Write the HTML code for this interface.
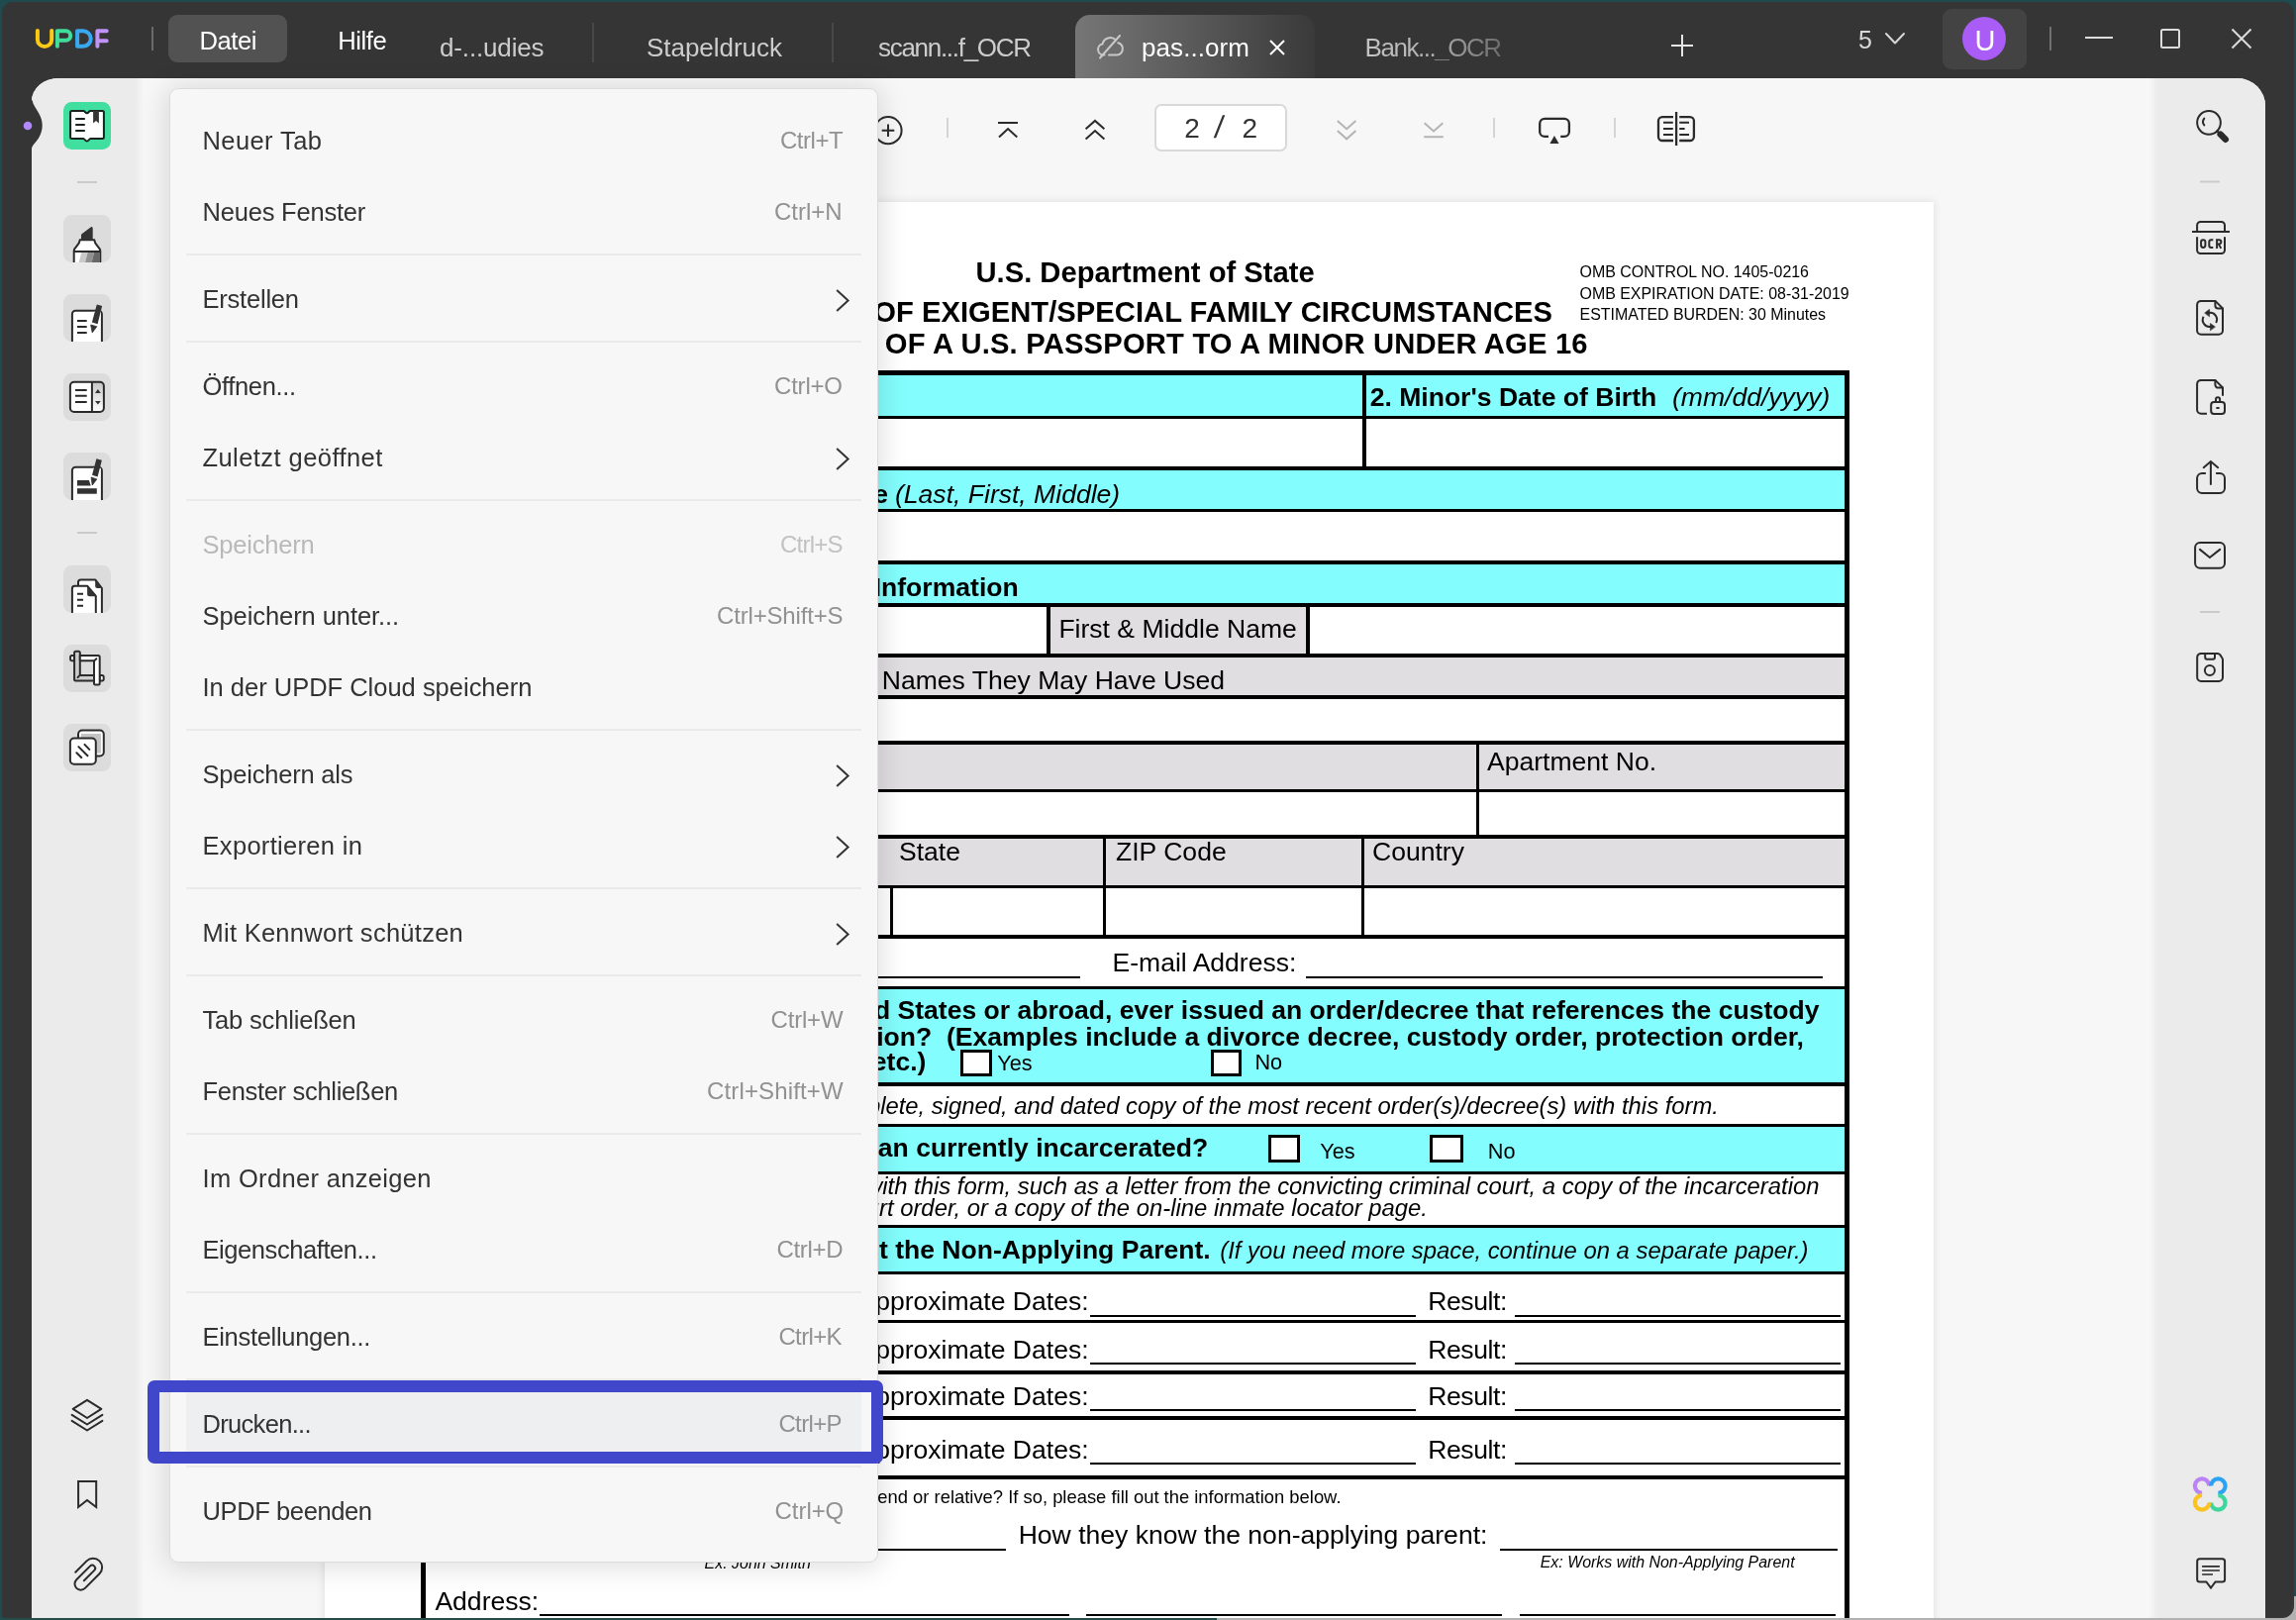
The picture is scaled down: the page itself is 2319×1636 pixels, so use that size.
<!DOCTYPE html>
<html><head><meta charset="utf-8"><title>UPDF</title>
<style>
html,body{margin:0;padding:0;}
body{width:2319px;height:1636px;position:relative;overflow:hidden;background:#1f4a4e;font-family:"Liberation Sans",sans-serif;color:#000;}
.t{position:absolute;white-space:nowrap;line-height:1;}
#w{position:absolute;left:0;top:0;width:2319px;height:1636px;will-change:transform;}
.r{position:absolute;}
svg{position:absolute;overflow:visible;}
</style></head><body><div id="w">
<div class="r" style="left:2296.00px;top:1612.00px;width:23.00px;height:24.00px;background:#b1b1b1;"></div>
<div class="r" style="left:2.00px;top:2.00px;width:2315.00px;height:1632.00px;background:#353535;border-radius:11px 11px 12px 3px;"></div>
<div class="r" style="left:32.00px;top:79.00px;width:2256.00px;height:1555.00px;background:#f7f7f8;border-radius:27px 28px 0 0 / 23px 28px 0 0;"></div>
<div class="r" style="left:32.00px;top:79.00px;width:110.00px;height:1555.00px;background:#ebebec;border-radius:27px 0 0 0 / 23px 0 0 0;"></div>
<div class="r" style="left:136.00px;top:79.00px;width:8.00px;height:1555.00px;background:linear-gradient(90deg,#ebebec,#f5f5f6);"></div>
<div class="r" style="left:2177.00px;top:79.00px;width:111.00px;height:1555.00px;background:#ebebec;border-radius:0 28px 0 0;"></div>
<div class="r" style="left:2171.00px;top:79.00px;width:8.00px;height:1555.00px;background:linear-gradient(90deg,#f7f7f8,#ebebec);"></div>
<svg style="left:0;top:0" width="60" height="200"><path d="M31 100 L32.6 101.5 C33.5 106 36.5 109.5 39 114 C41.5 118.5 42.7 122 42.7 126.7 C42.7 131 41.5 135 39 139.5 C36.5 143.5 33 146 32 149.5 L31 150 Z" fill="#353535"/><circle cx="28" cy="127" r="4.3" fill="#b388ff"/></svg>
<div class="r" style="left:328.00px;top:204.00px;width:1625.00px;height:1440.00px;background:#fff;box-shadow:0 0 8px 1px rgba(0,0,0,0.09);"></div>
<div class="t" style="top:260.80px;font-size:29.20px;font-weight:bold;left:985.50px;">U.S. Department of State</div>
<div class="t" style="top:301.40px;font-size:29.20px;font-weight:bold;letter-spacing:0.024px;right:750.98px;">STATEMENT OF EXIGENT/SPECIAL FAMILY CIRCUMSTANCES</div>
<div class="t" style="top:332.70px;font-size:29.20px;font-weight:bold;letter-spacing:0.185px;right:715.21px;">FOR ISSUANCE OF A U.S. PASSPORT TO A MINOR UNDER AGE 16</div>
<div class="t" style="top:267.12px;font-size:15.95px;left:1595.50px;">OMB CONTROL NO. 1405-0216</div>
<div class="t" style="top:288.72px;font-size:15.95px;left:1595.50px;">OMB EXPIRATION DATE: 08-31-2019</div>
<div class="t" style="top:310.22px;font-size:15.95px;left:1595.50px;">ESTIMATED BURDEN: 30 Minutes</div>
<div class="r" style="left:426.50px;top:376.00px;width:1439.50px;height:45.60px;background:#83fdfd;"></div>
<div class="r" style="left:426.50px;top:473.00px;width:1439.50px;height:42.40px;background:#83fdfd;"></div>
<div class="r" style="left:426.50px;top:568.00px;width:1439.50px;height:43.00px;background:#83fdfd;"></div>
<div class="r" style="left:1059.00px;top:611.00px;width:262.00px;height:51.00px;background:#e0dee0;"></div>
<div class="r" style="left:426.50px;top:611.00px;width:273.50px;height:51.00px;background:#e0dee0;"></div>
<div class="r" style="left:426.50px;top:662.00px;width:1439.50px;height:42.00px;background:#e0dee0;"></div>
<div class="r" style="left:426.50px;top:750.00px;width:1439.50px;height:48.00px;background:#e0dee0;"></div>
<div class="r" style="left:426.50px;top:845.00px;width:1439.50px;height:50.50px;background:#e0dee0;"></div>
<div class="r" style="left:426.50px;top:997.60px;width:1439.50px;height:97.10px;background:#83fdfd;"></div>
<div class="r" style="left:426.50px;top:1136.30px;width:1439.50px;height:48.00px;background:#83fdfd;"></div>
<div class="r" style="left:426.50px;top:1238.70px;width:1439.50px;height:46.60px;background:#83fdfd;"></div>
<div class="r" style="left:424.50px;top:374.00px;width:1443.50px;height:5.20px;background:#000;"></div>
<div class="r" style="left:424.50px;top:419.80px;width:1443.50px;height:3.60px;background:#000;"></div>
<div class="r" style="left:424.50px;top:471.25px;width:1443.50px;height:3.90px;background:#000;"></div>
<div class="r" style="left:424.50px;top:513.60px;width:1443.50px;height:3.60px;background:#000;"></div>
<div class="r" style="left:424.50px;top:566.20px;width:1443.50px;height:3.80px;background:#000;"></div>
<div class="r" style="left:424.50px;top:609.00px;width:1443.50px;height:3.60px;background:#000;"></div>
<div class="r" style="left:424.50px;top:660.20px;width:1443.50px;height:3.60px;background:#000;"></div>
<div class="r" style="left:424.50px;top:702.40px;width:1443.50px;height:3.60px;background:#000;"></div>
<div class="r" style="left:424.50px;top:747.95px;width:1443.50px;height:3.70px;background:#000;"></div>
<div class="r" style="left:424.50px;top:796.50px;width:1443.50px;height:3.60px;background:#000;"></div>
<div class="r" style="left:424.50px;top:843.00px;width:1443.50px;height:3.60px;background:#000;"></div>
<div class="r" style="left:424.50px;top:893.90px;width:1443.50px;height:3.60px;background:#000;"></div>
<div class="r" style="left:424.50px;top:944.20px;width:1443.50px;height:3.60px;background:#000;"></div>
<div class="r" style="left:424.50px;top:995.80px;width:1443.50px;height:3.60px;background:#000;"></div>
<div class="r" style="left:424.50px;top:1092.75px;width:1443.50px;height:3.90px;background:#000;"></div>
<div class="r" style="left:424.50px;top:1134.55px;width:1443.50px;height:3.50px;background:#000;"></div>
<div class="r" style="left:424.50px;top:1182.50px;width:1443.50px;height:3.60px;background:#000;"></div>
<div class="r" style="left:424.50px;top:1236.95px;width:1443.50px;height:3.50px;background:#000;"></div>
<div class="r" style="left:424.50px;top:1283.55px;width:1443.50px;height:3.50px;background:#000;"></div>
<div class="r" style="left:424.50px;top:1332.50px;width:1443.50px;height:3.60px;background:#000;"></div>
<div class="r" style="left:424.50px;top:1384.30px;width:1443.50px;height:3.60px;background:#000;"></div>
<div class="r" style="left:424.50px;top:1430.40px;width:1443.50px;height:3.60px;background:#000;"></div>
<div class="r" style="left:424.50px;top:1489.90px;width:1443.50px;height:3.80px;background:#000;"></div>
<div class="r" style="left:424.50px;top:374.00px;width:5.20px;height:1300.00px;background:#000;"></div>
<div class="r" style="left:1863.00px;top:374.00px;width:5.00px;height:1300.00px;background:#000;"></div>
<div class="r" style="left:1376.20px;top:376.00px;width:3.60px;height:99.00px;background:#000;"></div>
<div class="r" style="left:1057.20px;top:611.00px;width:3.60px;height:53.00px;background:#000;"></div>
<div class="r" style="left:1319.20px;top:611.00px;width:3.60px;height:53.00px;background:#000;"></div>
<div class="r" style="left:1490.50px;top:749.00px;width:3.40px;height:97.60px;background:#000;"></div>
<div class="r" style="left:1113.95px;top:844.00px;width:3.30px;height:103.80px;background:#000;"></div>
<div class="r" style="left:1375.15px;top:844.00px;width:3.30px;height:103.80px;background:#000;"></div>
<div class="r" style="left:898.60px;top:894.00px;width:3.20px;height:53.80px;background:#000;"></div>
<div class="r" style="left:698.00px;top:611.00px;width:4.00px;height:52.00px;background:#000;"></div>
<div class="t" style="top:388.12px;font-size:26.55px;font-weight:bold;left:1383.70px;">2. Minor's Date of Birth</div>
<div class="t" style="top:388.12px;font-size:26.55px;font-style:italic;left:1689.00px;">(mm/dd/yyyy)</div>
<div class="t" style="top:388.12px;font-size:26.55px;font-weight:bold;left:440.00px;">1. Minor's Name</div>
<div class="t" style="top:485.73px;font-size:26.55px;font-style:italic;left:904.00px;">(Last, First, Middle)</div>
<div class="t" style="top:485.73px;font-size:26.55px;font-weight:bold;right:1422.00px;">3. Applying Parent or Guardian's Name</div>
<div class="t" style="top:579.73px;font-size:26.55px;font-weight:bold;right:1290.30px;">4. Non-Applying Parent's Information</div>
<div class="t" style="top:621.62px;font-size:26.55px;left:1069.40px;">First &amp; Middle Name</div>
<div class="t" style="top:621.62px;font-size:26.55px;left:440.00px;">Last Name</div>
<div class="t" style="top:674.33px;font-size:26.55px;right:1082.00px;">List All Other Names They May Have Used</div>
<div class="t" style="top:755.73px;font-size:26.55px;left:1502.00px;">Apartment No.</div>
<div class="t" style="top:755.73px;font-size:26.55px;left:440.00px;">Last Known Address (Street)</div>
<div class="t" style="top:846.73px;font-size:26.55px;left:908.00px;">State</div>
<div class="t" style="top:846.73px;font-size:26.55px;left:1127.00px;">ZIP Code</div>
<div class="t" style="top:846.73px;font-size:26.55px;left:1386.00px;">Country</div>
<div class="t" style="top:846.73px;font-size:26.55px;left:440.00px;">City</div>
<div class="t" style="top:959.43px;font-size:26.55px;left:1123.50px;">E-mail Address:</div>
<div class="t" style="top:959.43px;font-size:26.55px;left:440.00px;">Telephone Number:</div>
<div class="r" style="left:668.00px;top:986.40px;width:422.80px;height:2.10px;background:#000;"></div>
<div class="r" style="left:1318.60px;top:986.40px;width:522.20px;height:2.10px;background:#000;"></div>
<div class="t" style="top:1006.52px;font-size:26.55px;font-weight:bold;right:481.50px;">5. Has a court, in the United States or abroad, ever issued an order/decree that references the custody</div>
<div class="t" style="top:1033.52px;font-size:26.55px;font-weight:bold;right:497.00px;">of the minor in this application?&nbsp; (Examples include a divorce decree, custody order, protection order,</div>
<div class="t" style="top:1058.72px;font-size:26.55px;font-weight:bold;right:1383.60px;">etc.)</div>
<div class="r" style="left:970.2px;top:1060.0px;width:31.5px;height:27.4px;border:3px solid #000;box-sizing:border-box;background:#fff"></div>
<div class="t" style="top:1062.55px;font-size:21.70px;left:1007.20px;">Yes</div>
<div class="r" style="left:1223.0px;top:1060.0px;width:31.3px;height:27.4px;border:3px solid #000;box-sizing:border-box;background:#fff"></div>
<div class="t" style="top:1062.35px;font-size:21.70px;left:1267.40px;">No</div>
<div class="t" style="top:1105.38px;font-size:23.85px;font-style:italic;right:583.00px;">If yes, please submit a complete, signed, and dated copy of the most recent order(s)/decree(s) with this form.</div>
<div class="t" style="top:1146.12px;font-size:26.55px;font-weight:bold;right:1098.70px;">6. Is the non-applying parent/guardian currently incarcerated?</div>
<div class="r" style="left:1281.1px;top:1145.9px;width:31.7px;height:27.7px;border:3px solid #000;box-sizing:border-box;background:#fff"></div>
<div class="t" style="top:1152.45px;font-size:21.70px;left:1333.30px;">Yes</div>
<div class="r" style="left:1444.0px;top:1145.9px;width:34.0px;height:27.7px;border:3px solid #000;box-sizing:border-box;background:#fff"></div>
<div class="t" style="top:1152.45px;font-size:21.70px;left:1502.80px;">No</div>
<div class="t" style="top:1186.38px;font-size:23.85px;font-style:italic;right:481.50px;">If yes, please submit evidence with this form, such as a letter from the convicting criminal court, a copy of the incarceration</div>
<div class="t" style="top:1207.88px;font-size:23.85px;font-style:italic;right:877.00px;">order or court order, or a copy of the on-line inmate locator page.</div>
<div class="t" style="top:1249.22px;font-size:26.55px;font-weight:bold;right:1096.30px;">7. Explain your attempts to contact the Non-Applying Parent.</div>
<div class="t" style="top:1251.08px;font-size:23.85px;font-style:italic;left:1232.30px;">(If you need more space, continue on a separate paper.)</div>
<div class="t" style="top:1300.52px;font-size:26.55px;left:440.00px;">Method:</div>
<div class="t" style="top:1300.52px;font-size:26.55px;right:1219.40px;">Approximate Dates:</div>
<div class="r" style="left:540.00px;top:1328.00px;width:330.00px;height:2.00px;background:#000;"></div>
<div class="r" style="left:1101.00px;top:1328.00px;width:329.00px;height:2.00px;background:#000;"></div>
<div class="t" style="top:1300.52px;font-size:26.55px;letter-spacing:-0.439px;left:1442.30px;">Result:</div>
<div class="r" style="left:1529.70px;top:1328.00px;width:329.30px;height:2.00px;background:#000;"></div>
<div class="t" style="top:1349.52px;font-size:26.55px;left:440.00px;">Method:</div>
<div class="t" style="top:1349.52px;font-size:26.55px;right:1219.40px;">Approximate Dates:</div>
<div class="r" style="left:540.00px;top:1376.00px;width:330.00px;height:2.00px;background:#000;"></div>
<div class="r" style="left:1101.00px;top:1376.00px;width:329.00px;height:2.00px;background:#000;"></div>
<div class="t" style="top:1349.52px;font-size:26.55px;letter-spacing:-0.439px;left:1442.30px;">Result:</div>
<div class="r" style="left:1529.70px;top:1376.00px;width:329.30px;height:2.00px;background:#000;"></div>
<div class="t" style="top:1396.52px;font-size:26.55px;left:440.00px;">Method:</div>
<div class="t" style="top:1396.52px;font-size:26.55px;right:1219.40px;">Approximate Dates:</div>
<div class="r" style="left:540.00px;top:1423.00px;width:330.00px;height:2.00px;background:#000;"></div>
<div class="r" style="left:1101.00px;top:1423.00px;width:329.00px;height:2.00px;background:#000;"></div>
<div class="t" style="top:1396.52px;font-size:26.55px;letter-spacing:-0.439px;left:1442.30px;">Result:</div>
<div class="r" style="left:1529.70px;top:1423.00px;width:329.30px;height:2.00px;background:#000;"></div>
<div class="t" style="top:1451.02px;font-size:26.55px;left:440.00px;">Method:</div>
<div class="t" style="top:1451.02px;font-size:26.55px;right:1219.40px;">Approximate Dates:</div>
<div class="r" style="left:540.00px;top:1477.00px;width:330.00px;height:2.00px;background:#000;"></div>
<div class="r" style="left:1101.00px;top:1477.00px;width:329.00px;height:2.00px;background:#000;"></div>
<div class="t" style="top:1451.02px;font-size:26.55px;letter-spacing:-0.439px;left:1442.30px;">Result:</div>
<div class="r" style="left:1529.70px;top:1477.00px;width:329.30px;height:2.00px;background:#000;"></div>
<div class="t" style="top:1503.30px;font-size:18.40px;right:964.50px;">8. Have you tried to contact the non-applying parent through a friend or relative? If so, please fill out the information below.</div>
<div class="t" style="top:1536.72px;font-size:26.55px;left:440.00px;">Name:</div>
<div class="r" style="left:520.00px;top:1564.00px;width:495.70px;height:2.00px;background:#000;"></div>
<div class="t" style="top:1536.72px;font-size:26.55px;left:1028.70px;">How they know the non-applying parent:</div>
<div class="r" style="left:1515.00px;top:1564.00px;width:340.70px;height:2.00px;background:#000;"></div>
<div class="t" style="top:1571.03px;font-size:15.95px;font-style:italic;left:711.60px;">Ex: John Smith</div>
<div class="t" style="top:1570.33px;font-size:15.95px;font-style:italic;left:1555.70px;">Ex: Works with Non-Applying Parent</div>
<div class="t" style="top:1603.72px;font-size:26.55px;left:439.40px;">Address:</div>
<div class="r" style="left:544.80px;top:1630.00px;width:535.60px;height:2.10px;background:#000;"></div>
<div class="r" style="left:1097.00px;top:1630.00px;width:419.50px;height:2.10px;background:#000;"></div>
<div class="r" style="left:1534.70px;top:1630.00px;width:319.30px;height:2.10px;background:#000;"></div>
<svg style="left:0.00px;top:0.00px;" width="130.00" height="70.00" fill="none"><g stroke-width="4.0" stroke-linecap="round" stroke-linejoin="round">
<path d="M37.9 31.1 V39.9 a7.15 7.15 0 0 0 14.3 0 V31.1" stroke="#fcc916"/>
<path d="M57.9 46.8 V31.3 H66.5 a4.7 4.7 0 0 1 0 9.4 H57.9" stroke="#40de9b"/>
<path d="M78.1 31.3 H83.95 a7.75 7.75 0 0 1 0 15.5 H78.1 Z" stroke="#38a9f0"/>
<path d="M98.4 46.8 V31.3 H107.7 M98.4 41.2 H107.7" stroke="#c193fa"/>
</g></svg>
<div class="r" style="left:152.50px;top:27.00px;width:2.00px;height:24.00px;background:#6a6a6a;"></div>
<div class="r" style="left:170.00px;top:15.00px;width:120.00px;height:48.00px;background:#525252;border-radius:9px;"></div>
<div class="t" style="top:29.40px;font-size:25.60px;color:#ffffff;letter-spacing:-0.416px;left:201.40px;">Datei</div>
<div class="t" style="top:29.40px;font-size:25.60px;color:#ffffff;letter-spacing:-0.429px;left:341.30px;">Hilfe</div>
<div class="t" style="top:35.00px;font-size:26.00px;color:#cdcdcd;letter-spacing:-0.150px;left:444.00px;">d-...udies</div>
<div class="r" style="left:598.00px;top:23.00px;width:2.00px;height:40.00px;background:#484848;"></div>
<div class="t" style="top:35.00px;font-size:26.00px;color:#cdcdcd;letter-spacing:-0.030px;left:653.00px;">Stapeldruck</div>
<div class="r" style="left:840.00px;top:23.00px;width:2.00px;height:40.00px;background:#484848;"></div>
<div class="t" style="top:35.00px;font-size:26.00px;color:#cdcdcd;letter-spacing:-1.293px;left:887.00px;">scann...f_OCR</div>
<div class="r" style="left:1086.00px;top:14.60px;width:242.00px;height:64.60px;background:linear-gradient(90deg,#767676 0%,#5c5c5c 45%,#434343 85%,#3a3a3a 100%);border-radius:15px 15px 0 0;"></div>
<svg style="left:1106.00px;top:33.00px;" width="32.00" height="28.00" fill="none"><g stroke="#c9c9c9" stroke-width="2" stroke-linecap="round" stroke-linejoin="round">
<path d="M9.5 22.5 H8.5 a5.5 5.5 0 0 1 -1 -10.9 a8 8 0 0 1 13.5 -4.2"/>
<path d="M23.2 10.2 a6.3 6.3 0 0 1 -0.7 12.3 H14"/>
<path d="M25 3 L5 25.5"/>
</g></svg>
<div class="t" style="top:35.00px;font-size:26.00px;color:#ffffff;letter-spacing:0.079px;left:1153.00px;">pas...orm</div>
<svg style="left:1282.00px;top:40.00px;" width="16.00" height="16.00" fill="none"><path d="M1 1 L15 15 M15 1 L1 15" stroke="#fff" stroke-width="2"/></svg>
<div class="t" style="left:1378.6px;top:34.99px;font-size:26px;letter-spacing:-1.477px;background:linear-gradient(90deg,#c4c4c4 0%,#b0b0b0 50%,#6c6c6c 100%);-webkit-background-clip:text;background-clip:text;color:transparent;">Bank..._OCR</div>
<svg style="left:1688.00px;top:35.00px;" width="22.00" height="22.00" fill="none"><path d="M11 0 V22 M0 11 H22" stroke="#e6e6e6" stroke-width="2"/></svg>
<div class="t" style="top:27.50px;font-size:25.00px;color:#d8d8d8;left:1877.00px;">5</div>
<svg style="left:1904.00px;top:33.00px;" width="20.00" height="12.00" fill="none"><path d="M1 1 L10 10.5 L19 1" stroke="#d8d8d8" stroke-width="2" stroke-linecap="round" stroke-linejoin="round"/></svg>
<div class="r" style="left:1962.00px;top:9.00px;width:84.50px;height:60.50px;background:#434343;border-radius:9px;"></div>
<div class="r" style="left:1982.00px;top:17.00px;width:44.00px;height:44.00px;background:#a95cf6;border-radius:50%;"></div>
<div class="t" style="top:27.00px;font-size:29.00px;color:#fff;letter-spacing:-1.943px;left:1994.50px;">U</div>
<div class="r" style="left:2070.00px;top:27.00px;width:2.00px;height:24.00px;background:#707070;"></div>
<div class="r" style="left:2106.00px;top:37.00px;width:28.00px;height:2.00px;background:#dcdcdc;"></div>
<div class="r" style="left:2182px;top:29px;width:20px;height:19.5px;border:2px solid #dcdcdc;border-radius:2.5px;box-sizing:border-box"></div>
<svg style="left:2254.00px;top:29.00px;" width="20.00" height="20.00" fill="none"><path d="M0.5 0.5 L19.5 19.5 M19.5 0.5 L0.5 19.5" stroke="#dcdcdc" stroke-width="2"/></svg>
<svg style="left:882.00px;top:117.00px;" width="30.00" height="30.00" fill="none"><circle cx="15" cy="14.7" r="13.6" stroke="#2b2b2b" stroke-width="2"/><path d="M15 8.5 V21 M8.7 14.7 H21.3" stroke="#2b2b2b" stroke-width="2"/></svg>
<div class="r" style="left:956.00px;top:119.00px;width:2.00px;height:20.00px;background:#d4d4d4;"></div>
<svg style="left:0.00px;top:0.00px;" width="2319.00" height="200.00" fill="none"><path d="M1008 124 H1028 M1009 138.4 L1018.1 130.1 L1027.3 138.4" stroke="#2b2b2b" stroke-width="2"/></svg>
<svg style="left:0.00px;top:0.00px;" width="2319.00" height="200.00" fill="none"><path d="M1096.6 130.2 L1106 121.9 L1115.4 130.2 M1096.6 140.4 L1106 132.1 L1115.4 140.4" stroke="#2b2b2b" stroke-width="2"/></svg>
<div class="r" style="left:1166px;top:105px;width:134px;height:47.5px;border:2px solid #d9d9d9;border-radius:7px;box-sizing:border-box;background:#fff"></div>
<div class="t" style="top:115.90px;font-size:28.00px;color:#333;left:1196.20px;">2</div>
<div class="t" style="top:113.45px;font-size:31.50px;color:#333;left:1227.00px;transform:skewX(-7deg);">/</div>
<div class="t" style="top:115.90px;font-size:28.00px;color:#333;left:1254.40px;">2</div>
<svg style="left:0.00px;top:0.00px;" width="2319.00" height="200.00" fill="none"><path d="M1350.8 121.9 L1360.1 130.2 L1369.4 121.9 M1350.8 132 L1360.1 140.3 L1369.4 132" stroke="#b4b4b4" stroke-width="2"/></svg>
<svg style="left:0.00px;top:0.00px;" width="2319.00" height="200.00" fill="none"><path d="M1438.7 124.2 L1448 132.5 L1457.3 124.2 M1438.2 138.2 H1457.8" stroke="#b4b4b4" stroke-width="2"/></svg>
<div class="r" style="left:1508.00px;top:119.00px;width:2.00px;height:20.00px;background:#d4d4d4;"></div>
<svg style="left:0.00px;top:0.00px;" width="2319.00" height="200.00" fill="none"><path d="M1564 137.9 H1560.2 a5 5 0 0 1 -5 -5 V124.9 a5 5 0 0 1 5 -5 H1579.9 a5 5 0 0 1 5 5 V132.9 a5 5 0 0 1 -5 5 H1576.2" stroke="#2b2b2b" stroke-width="2.3"/><path d="M1569.95 137 L1574.5 144.9 H1565.4 Z" fill="#2b2b2b"/></svg>
<div class="r" style="left:1630.00px;top:119.00px;width:2.00px;height:20.00px;background:#d4d4d4;"></div>
<svg style="left:0.00px;top:0.00px;" width="2319.00" height="200.00" fill="none"><g stroke="#2b2b2b" stroke-width="2.3" stroke-linecap="butt" stroke-linejoin="round"><path d="M1690 118.1 H1679 a4 4 0 0 0 -4 4 V138 a4 4 0 0 0 4 4 H1690 M1696.2 118.1 H1706.9 a4 4 0 0 1 4 4 V138 a4 4 0 0 1 -4 4 H1696.2"/><path d="M1693.1 113 V147"/><path d="M1680 123.8 H1689.8 M1680 130 H1689.8 M1680 135.9 H1689.8 M1696.2 123.8 H1706 M1696.2 130 H1701.6 M1696.2 135.9 H1706" stroke-width="2"/></g></svg>
<svg style="left:64.00px;top:103.00px;overflow:hidden;border-radius:8.5px;background:#40dfa0" width="48" height="48" fill="none"><path d="M8.6 9 H20.3 c1.6 0 1.8 2.3 3.5 2.3 c1.7 0 1.9 -2.3 3.5 -2.3 H39.4 a1.5 1.5 0 0 1 1.5 1.5 V35.5 a1.5 1.5 0 0 1 -1.5 1.5 H27.5 c-1.6 0 -1.9 2.6 -3.7 2.6 c-1.8 0 -2.1 -2.6 -3.7 -2.6 H8.6 a1.5 1.5 0 0 1 -1.5 -1.5 V10.5 a1.5 1.5 0 0 1 1.5 -1.5 z" fill="#fff" stroke="#17241e" stroke-width="2" stroke-linejoin="round"/>
<path d="M12.2 17 H21.8 M12.2 23 H21.8 M12.2 29 H21.8" stroke="#17241e" stroke-width="1.9"/>
<path d="M30.1 9 H35.9 V21.4 L33 18.9 L30.1 21.4 z" fill="#333"/></svg>
<svg style="left:64.00px;top:217.00px;overflow:hidden;border-radius:8.5px;background:#dcdcdc" width="48" height="48" fill="none"><path d="M18 24.8 V20.4 a1.6 1.6 0 0 1 .6 -1.25 L27.9 12.3 a1.1 1.1 0 0 1 1.8 .85 V24.8 z" fill="#333"/>
<path d="M16.7 25.3 H31.3 C31.8 31.5 37.3 32.3 37.3 36.3 V50 H10.7 V36.3 C10.7 32.3 16.2 31.5 16.7 25.3 z" fill="#fff" stroke="#2a2a2a" stroke-width="2" stroke-linejoin="round"/>
<path d="M18.3 38 H24.6 L22 48 H15.7 z" fill="#c9c9c9"/><path d="M24.6 38 H31 L28.6 48 H22 z" fill="#919191"/><path d="M31 38 H36.3 V48 H28.6 z" fill="#686868"/>
<path d="M10.7 37 H37.3" stroke="#2a2a2a" stroke-width="2"/></svg>
<svg style="left:64.00px;top:297.00px;overflow:hidden;border-radius:8.5px;background:#dcdcdc" width="48" height="48" fill="none"><path d="M8.9 50 V20.3 a3.5 3.5 0 0 1 3.5 -3.5 H35.4 a3.5 3.5 0 0 1 3.5 3.5 V50" fill="#fff" stroke="#2a2a2a" stroke-width="2"/>
<path d="M14 26.9 H23.7 M14 32.9 H23.7 M14 38.9 H23.7" stroke="#2a2a2a" stroke-width="2"/>
<clipPath id="c3"><rect x="9.9" y="17.8" width="28" height="34"/></clipPath>
<g clip-path="url(#c3)"><path d="M32.6 9.3 L40.4 11.2 L35.5 31.7 L27.5 29.3 z" fill="#fff"/></g>
<path d="M33.8 10.5 L39.1 11.9 L34.6 30.3 L28.9 28.6 z" fill="#333"/>
<path d="M27.7 31 L33.8 32.8 L29.2 38.9 z" fill="#333" stroke="#333" stroke-width="0.8" stroke-linejoin="round"/></svg>
<svg style="left:64.00px;top:377.00px;overflow:hidden;border-radius:8.5px;background:#dcdcdc" width="48" height="48" fill="none"><defs><linearGradient id="g4" x1="0" y1="0" x2="0" y2="1"><stop offset="0" stop-color="#c6c6c6"/><stop offset="1" stop-color="#ffffff"/></linearGradient></defs>
<rect x="6.9" y="8.7" width="34" height="30.2" rx="4" fill="#fff"/>
<path d="M28.9 8.7 H36.9 a4 4 0 0 1 4 4 V34.9 a4 4 0 0 1 -4 4 H28.9 z" fill="url(#g4)"/>
<rect x="6.9" y="8.7" width="34" height="30.2" rx="4" stroke="#2a2a2a" stroke-width="2"/>
<path d="M28.9 8.7 V38.9" stroke="#2a2a2a" stroke-width="2"/>
<path d="M12 16.9 H23.7 M12 22.8 H23.7 M12 28.9 H23.7" stroke="#2a2a2a" stroke-width="2"/>
<path d="M34.9 15.9 L37.8 19.9 H32 z M32 28 H37.8 L34.9 31.6 z" fill="#333"/></svg>
<svg style="left:64.00px;top:457.00px;overflow:hidden;border-radius:8.5px;background:#dcdcdc" width="48" height="48" fill="none"><path d="M8.9 50 V18.3 a3.5 3.5 0 0 1 3.5 -3.5 H35.4 a3.5 3.5 0 0 1 3.5 3.5 V50" fill="#fff" stroke="#2a2a2a" stroke-width="2"/>
<path d="M14 28.1 H25.9 L27.7 33.6 H14 z" fill="#333"/><rect x="14" y="36.2" width="19.8" height="5.5" fill="#333"/>
<clipPath id="c5"><rect x="9.9" y="15.8" width="28" height="34"/></clipPath>
<g clip-path="url(#c5)"><path d="M32.2 5.1 L40.2 7.1 L35.5 25.9 L27.6 23.5 z" fill="#fff"/>
<path d="M26.6 23.6 L35.2 26.3 L29.3 35 z" fill="#fff"/></g>
<path d="M33.4 6.3 L38.9 7.7 L34.6 24.5 L29.05 22.7 z" fill="#333"/>
<path d="M28.1 25.1 L33.8 26.9 L29.2 33 z" fill="#333" stroke="#333" stroke-width="0.8" stroke-linejoin="round"/></svg>
<div class="r" style="left:78.00px;top:537.00px;width:20.00px;height:2.00px;background:#cbcbcb;"></div>
<div class="r" style="left:78.00px;top:183.00px;width:20.00px;height:2.00px;background:#cbcbcb;"></div>
<svg style="left:64.00px;top:571.30px;overflow:hidden;border-radius:8.5px;background:#dcdcdc" width="48" height="48" fill="none"><path d="M15 50 V17.1 a2.5 2.5 0 0 1 2.5 -2.5 H32.4 L38.9 23 V50" fill="#fff" stroke="#2a2a2a" stroke-width="2" stroke-linejoin="round"/>
<path d="M32.2 15 V21.1 a2 2 0 0 0 2 2 H39.3 z" fill="#333"/>
<path d="M8.9 50 V23.3 a2.5 2.5 0 0 1 2.5 -2.5 H24.3 L32.8 31 V50" fill="#fff" stroke="#2a2a2a" stroke-width="2" stroke-linejoin="round"/>
<path d="M24.1 21.1 V28.7 a2.5 2.5 0 0 0 2.5 2.5 H33.2 z" fill="#333"/>
<path d="M14 28.7 H20 M14 34.7 H20 M14 40.7 H20" stroke="#2a2a2a" stroke-width="2"/></svg>
<svg style="left:64.00px;top:651.30px;overflow:hidden;border-radius:8.5px;background:#dcdcdc" width="48" height="48" fill="none"><path d="M11.1 10.9 H8.6 a1.5 1.5 0 0 0 -1.5 1.5 V14.7 a1.5 1.5 0 0 0 1.5 1.5 H11.1 z" fill="#fff" stroke="#2a2a2a" stroke-width="2" stroke-linejoin="round"/>
<path d="M36.7 31 H39.2 a1.5 1.5 0 0 1 1.5 1.5 V34.9 a1.5 1.5 0 0 1 -1.5 1.5 H36.7 z" fill="#fff" stroke="#2a2a2a" stroke-width="2" stroke-linejoin="round"/>
<path d="M11.1 8.2 a1.5 1.5 0 0 1 1.5 -1.5 h2.7 a1.5 1.5 0 0 1 1.5 1.5 V31 H31 V36.4 H12.6 a1.5 1.5 0 0 1 -1.5 -1.5 z" fill="#cdcdcd" stroke="#2a2a2a" stroke-width="2" stroke-linejoin="round"/>
<path d="M16.8 10.9 H35.2 a1.5 1.5 0 0 1 1.5 1.5 V39 a1.5 1.5 0 0 1 -1.5 1.5 H32.5 a1.5 1.5 0 0 1 -1.5 -1.5 V16.2 H16.8 z" fill="#fff" stroke="#2a2a2a" stroke-width="2" stroke-linejoin="round"/>
<path d="M31 16.6 L33.3 14.3 M17 30.6 L14.5 33.1" stroke="#2a2a2a" stroke-width="2" stroke-linecap="round"/></svg>
<svg style="left:64.00px;top:731.30px;overflow:hidden;border-radius:8.5px;background:#dcdcdc" width="48" height="48" fill="none"><rect x="15" y="6.5" width="25.8" height="25.9" rx="4" fill="#fff" stroke="#2a2a2a" stroke-width="2"/>
<rect x="17.8" y="9.9" width="20.1" height="19.7" fill="#c4c4c4"/>
<rect x="6.9" y="14.6" width="25.9" height="26.1" rx="4" fill="#fff" stroke="#2a2a2a" stroke-width="2"/>
<path d="M15.4 23.1 L24.5 32.2 M21.5 20.9 L26.3 25.9 M13.4 29.2 L18.2 34" stroke="#2a2a2a" stroke-width="2" stroke-linecap="round"/></svg>
<svg style="left:0.00px;top:0.00px;" width="200.00" height="1636.00" fill="none"><g stroke="#2a2a2a" stroke-width="2" stroke-linejoin="round">
<path d="M88 1413.8 L102.3 1422.9 L88 1432 L73.7 1422.9 z"/>
<path d="M72.6 1428.8 L88 1438.5 L103.4 1428.8 M72.6 1434.8 L88 1444.5 L103.4 1434.8" stroke-linecap="round"/>
<path d="M79.1 1496.1 H97.2 V1522 L88 1515 L79.1 1522 z" stroke-linejoin="miter"/>
<g transform="translate(48,1478) rotate(-45)"><path d="M-57.6 97.5 L-41.6 97.5 A9.15 9.15 0 0 1 -41.6 115.8 L-62.2 115.8 A6.1 6.1 0 0 1 -62.2 103.6 L-42.9 103.6 A3.05 3.05 0 0 1 -42.9 109.7 L-57.6 109.7" stroke-linecap="round"/></g>
</g></svg>
<svg style="left:0.00px;top:0.00px;" width="2319.00" height="1636.00" fill="none"><g stroke="#2a2a2a" stroke-width="2" stroke-linecap="round" stroke-linejoin="round">
<circle cx="2231" cy="123.85" r="11.85"/>
<path d="M2226.3 119.6 Q2223.6 123 2226.3 126.4"/>
<path d="M2239.4 132.3 L2242 135"/>
<path d="M2242.6 135.6 L2247.8 140.8" stroke-width="6.4"/>
<!-- OCR -->
<path d="M2219.1 233.9 V227.4 a3.5 3.5 0 0 1 3.5 -3.5 H2243.5 a3.5 3.5 0 0 1 3.5 3.5 V233.9" stroke-linecap="butt"/>
<path d="M2214 233.9 H2252" stroke-linecap="butt"/>
<path d="M2219.1 239.2 V252.5 a3.5 3.5 0 0 0 3.5 3.5 H2243.5 a3.5 3.5 0 0 0 3.5 -3.5 V239.2" stroke-linecap="butt"/>
<rect x="2223.1" y="242.2" width="4.3" height="7.7" rx="2.1"/>
<path d="M2235.3 242.2 H2233.3 a2 2 0 0 0 -2 2 V247.9 a2 2 0 0 0 2 2 H2235.3" stroke-linecap="butt"/>
<path d="M2239.1 250.9 V242.2 H2241.3 a2 2 0 0 1 0 4.2 H2239.3 M2241 246.6 L2243.3 250.9" stroke-linecap="butt" stroke-linejoin="miter"/>
<!-- convert -->
<path d="M2237.4 303.9 H2223.1 a4 4 0 0 0 -4 4 V333.7 a4 4 0 0 0 4 4 H2241 a4 4 0 0 0 4 -4 V311.5 z"/>
<path d="M2237.4 304.2 V308.6 a3 3 0 0 0 3 3 H2244.8"/>
<path d="M2231 316 A6.8 6.8 0 0 1 2238.2 326" stroke-linecap="butt"/>
<path d="M2225.6 319.8 A6.8 6.8 0 0 0 2233 329.7" stroke-linecap="butt"/>
<path d="M2226.9 315.9 L2231.6 312.3 V319.5 z M2237.2 329.9 L2232.4 326.5 V333.5 z" fill="#2a2a2a" stroke-width="0.6"/>
<!-- protect -->
<path d="M2229 417.7 H2223.1 a4 4 0 0 1 -4 -4 V387.9 a4 4 0 0 1 4 -4 H2237.4 L2245 391.5 V399.8" stroke-linecap="butt"/>
<path d="M2237.4 384.2 V388.6 a3 3 0 0 0 3 3 H2244.8"/>
<rect x="2233.2" y="406" width="13.8" height="11.9" rx="3"/>
<path d="M2238 405.5 V403.2 a2.05 2.05 0 0 1 4.1 0 V405.5"/>
<path d="M2238.4 412 H2241.6" stroke-linecap="butt"/>
<!-- share -->
<path d="M2227.9 478.1 H2224.1 a5 5 0 0 0 -5 5 V493 a5 5 0 0 0 5 5 H2242 a5 5 0 0 0 5 -5 V483.1 a5 5 0 0 0 -5 -5 H2238.1" stroke-linecap="butt"/>
<path d="M2232.9 466.4 V488.9 M2225.7 472.2 L2232.9 466 L2240.2 472.2" stroke-linejoin="miter"/>
<!-- mail -->
<rect x="2217.1" y="548" width="29.9" height="25.8" rx="5"/>
<path d="M2221.9 554.9 L2231.9 563 L2242.2 554.9" stroke-linejoin="miter"/>
<!-- save -->
<path d="M2223.2 659.9 H2239.8 a3 3 0 0 1 2.4 1.2 L2244.3 664.3 a3 3 0 0 1 .7 1.9 V684 a4 4 0 0 1 -4 4 H2223.2 a4 4 0 0 1 -4 -4 V663.9 a4 4 0 0 1 4 -4 z"/>
<path d="M2227.2 660.2 V663.8 a2 2 0 0 0 2 2 H2235 a2 2 0 0 0 2 -2 V660.2"/>
<circle cx="2231.9" cy="676.9" r="5"/>
<!-- comment -->
<path d="M2221.7 1574.2 H2244.6 a2.5 2.5 0 0 1 2.5 2.5 V1594.9 a2.5 2.5 0 0 1 -2.5 2.5 H2237.6 L2233 1603.6 L2228.4 1597.4 H2221.7 a2.5 2.5 0 0 1 -2.5 -2.5 V1576.7 a2.5 2.5 0 0 1 2.5 -2.5 z" stroke-linejoin="miter"/>
<path d="M2224.1 1581.9 H2241.9 M2224.1 1586 H2241.9 M2224.1 1590 H2235" stroke-width="1.7" stroke-linecap="butt"/>
</g>
<rect x="2222" y="182.5" width="20" height="2" fill="#cbcbcb"/>
<rect x="2222" y="617" width="20" height="2" fill="#cbcbcb"/>
<!-- AI flower -->
<g stroke-width="4.2" fill="none" stroke-linecap="butt">
<path d="M2231.3 1500.6 A7.2 7.2 0 1 0 2224.1 1507.8" stroke="#bb83f6"/>
<path d="M2240.4 1507.8 A7.2 7.2 0 1 0 2233.2 1500.6" stroke="#2ba2f3"/>
<path d="M2233.2 1517.4 A7.2 7.2 0 1 0 2240.4 1510.2" stroke="#3dd69c"/>
<path d="M2224.1 1510.2 A7.2 7.2 0 1 0 2231.3 1517.4" stroke="#fac31f"/>
</g></svg>
<div class="r" style="left:171px;top:89px;width:716px;height:1489px;background:#f8f7f8;border-radius:9px;border:1.5px solid #dddbde;box-sizing:border-box;box-shadow:0 2px 28px 3px rgba(0,0,0,0.13);"></div>
<div class="r" style="left:188.00px;top:1403.00px;width:682.00px;height:72.00px;background:#eeeff1;border-radius:6px;"></div>
<div class="t" style="top:130.35px;font-size:25.50px;color:#333333;letter-spacing:0.413px;left:204.50px;">Neuer Tab</div>
<div class="t" style="top:129.80px;font-size:24.00px;color:#919191;letter-spacing:-0.480px;left:788.00px;">Ctrl+T</div>
<div class="t" style="top:202.35px;font-size:25.50px;color:#333333;letter-spacing:-0.204px;left:204.50px;">Neues Fenster</div>
<div class="t" style="top:201.80px;font-size:24.00px;color:#919191;letter-spacing:-0.015px;left:782.00px;">Ctrl+N</div>
<div class="r" style="left:188.00px;top:256.00px;width:682.00px;height:2.00px;background:#ebeaeb;"></div>
<div class="t" style="top:290.35px;font-size:25.50px;color:#333333;letter-spacing:-0.214px;left:204.50px;">Erstellen</div>
<svg style="left:843.50px;top:291.50px;" width="14.00" height="23.00" fill="none"><path d="M1.2 1 L12.6 11.5 L1.2 22" stroke="#333" stroke-width="2" stroke-linejoin="miter"/></svg>
<div class="r" style="left:188.00px;top:344.00px;width:682.00px;height:2.00px;background:#ebeaeb;"></div>
<div class="t" style="top:378.35px;font-size:25.50px;color:#333333;letter-spacing:-0.355px;left:204.50px;">Öffnen...</div>
<div class="t" style="top:377.80px;font-size:24.00px;color:#919191;letter-spacing:-0.202px;left:782.00px;">Ctrl+O</div>
<div class="t" style="top:450.35px;font-size:25.50px;color:#333333;letter-spacing:0.432px;left:204.50px;">Zuletzt geöffnet</div>
<svg style="left:843.50px;top:451.50px;" width="14.00" height="23.00" fill="none"><path d="M1.2 1 L12.6 11.5 L1.2 22" stroke="#333" stroke-width="2" stroke-linejoin="miter"/></svg>
<div class="r" style="left:188.00px;top:504.00px;width:682.00px;height:2.00px;background:#ebeaeb;"></div>
<div class="t" style="top:538.35px;font-size:25.50px;color:#b9b9b9;letter-spacing:-0.204px;left:204.50px;">Speichern</div>
<div class="t" style="top:537.80px;font-size:24.00px;color:#c2c2c2;letter-spacing:-0.750px;left:788.00px;">Ctrl+S</div>
<div class="t" style="top:610.35px;font-size:25.50px;color:#333333;letter-spacing:-0.070px;left:204.50px;">Speichern unter...</div>
<div class="t" style="top:609.80px;font-size:24.00px;color:#919191;letter-spacing:-0.163px;left:724.00px;">Ctrl+Shift+S</div>
<div class="t" style="top:682.35px;font-size:25.50px;color:#333333;letter-spacing:-0.007px;left:204.50px;">In der UPDF Cloud speichern</div>
<div class="r" style="left:188.00px;top:736.00px;width:682.00px;height:2.00px;background:#ebeaeb;"></div>
<div class="t" style="top:770.35px;font-size:25.50px;color:#333333;letter-spacing:-0.218px;left:204.50px;">Speichern als</div>
<svg style="left:843.50px;top:771.50px;" width="14.00" height="23.00" fill="none"><path d="M1.2 1 L12.6 11.5 L1.2 22" stroke="#333" stroke-width="2" stroke-linejoin="miter"/></svg>
<div class="t" style="top:842.35px;font-size:25.50px;color:#333333;letter-spacing:0.312px;left:204.50px;">Exportieren in</div>
<svg style="left:843.50px;top:843.50px;" width="14.00" height="23.00" fill="none"><path d="M1.2 1 L12.6 11.5 L1.2 22" stroke="#333" stroke-width="2" stroke-linejoin="miter"/></svg>
<div class="r" style="left:188.00px;top:896.00px;width:682.00px;height:2.00px;background:#ebeaeb;"></div>
<div class="t" style="top:930.35px;font-size:25.50px;color:#333333;letter-spacing:0.267px;left:204.50px;">Mit Kennwort schützen</div>
<svg style="left:843.50px;top:931.50px;" width="14.00" height="23.00" fill="none"><path d="M1.2 1 L12.6 11.5 L1.2 22" stroke="#333" stroke-width="2" stroke-linejoin="miter"/></svg>
<div class="r" style="left:188.00px;top:984.00px;width:682.00px;height:2.00px;background:#ebeaeb;"></div>
<div class="t" style="top:1018.35px;font-size:25.50px;color:#333333;letter-spacing:-0.170px;left:204.50px;">Tab schließen</div>
<div class="t" style="top:1017.80px;font-size:24.00px;color:#919191;letter-spacing:-0.199px;left:778.60px;">Ctrl+W</div>
<div class="t" style="top:1090.35px;font-size:25.50px;color:#333333;letter-spacing:-0.311px;left:204.50px;">Fenster schließen</div>
<div class="t" style="top:1089.80px;font-size:24.00px;color:#919191;letter-spacing:0.142px;left:714.00px;">Ctrl+Shift+W</div>
<div class="r" style="left:188.00px;top:1144.00px;width:682.00px;height:2.00px;background:#ebeaeb;"></div>
<div class="t" style="top:1178.35px;font-size:25.50px;color:#333333;letter-spacing:0.331px;left:204.50px;">Im Ordner anzeigen</div>
<div class="t" style="top:1250.35px;font-size:25.50px;color:#333333;letter-spacing:-0.425px;left:204.50px;">Eigenschaften...</div>
<div class="t" style="top:1249.80px;font-size:24.00px;color:#919191;letter-spacing:-0.295px;left:784.40px;">Ctrl+D</div>
<div class="r" style="left:188.00px;top:1304.00px;width:682.00px;height:2.00px;background:#ebeaeb;"></div>
<div class="t" style="top:1338.35px;font-size:25.50px;color:#333333;letter-spacing:-0.298px;left:204.50px;">Einstellungen...</div>
<div class="t" style="top:1337.80px;font-size:24.00px;color:#919191;letter-spacing:-0.630px;left:786.40px;">Ctrl+K</div>
<div class="r" style="left:188.00px;top:1392.00px;width:682.00px;height:2.00px;background:#ebeaeb;"></div>
<div class="t" style="top:1426.35px;font-size:25.50px;color:#333333;letter-spacing:-0.679px;left:204.50px;">Drucken...</div>
<div class="t" style="top:1425.80px;font-size:24.00px;color:#919191;letter-spacing:-0.630px;left:786.40px;">Ctrl+P</div>
<div class="r" style="left:188.00px;top:1480.00px;width:682.00px;height:2.00px;background:#ebeaeb;"></div>
<div class="t" style="top:1514.35px;font-size:25.50px;color:#333333;letter-spacing:-0.389px;left:204.50px;">UPDF beenden</div>
<div class="t" style="top:1513.80px;font-size:24.00px;color:#919191;letter-spacing:-0.062px;left:782.60px;">Ctrl+Q</div>
<div class="r" style="left:149px;top:1394px;width:743px;height:84px;border:12px solid #4147cb;border-radius:7px;box-sizing:border-box;"></div>
<div class="r" style="left:0.00px;top:1634.00px;width:1229.00px;height:2.00px;background:#244c49;"></div>
<div class="r" style="left:1229.00px;top:1634.00px;width:1090.00px;height:2.00px;background:#b1b1b1;"></div>
</div></body></html>
